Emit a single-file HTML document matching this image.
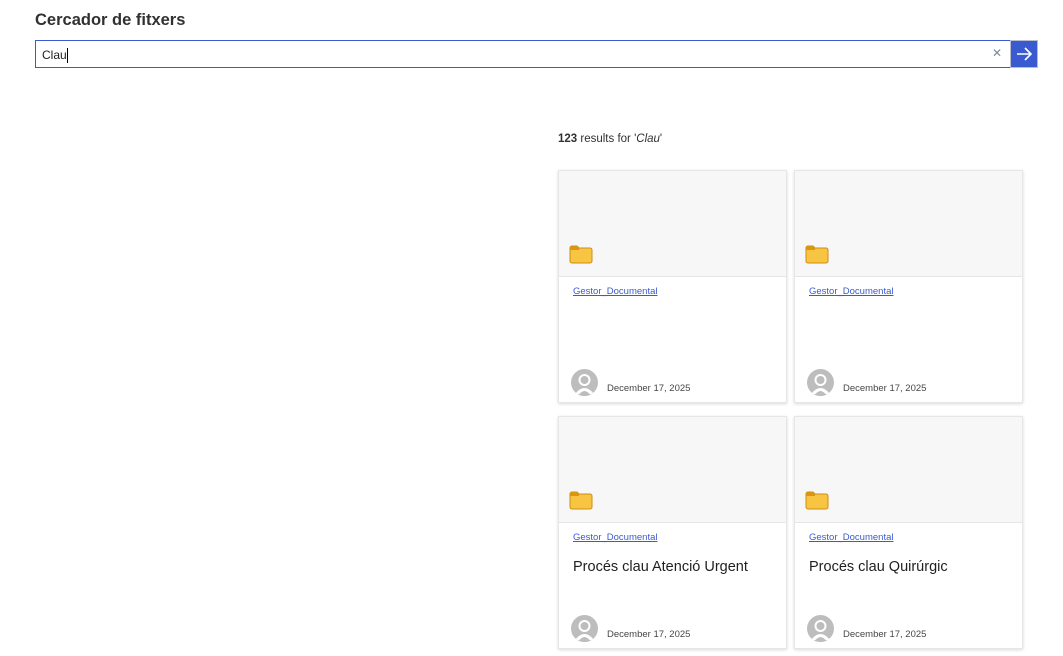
<!DOCTYPE html>
<html><head><meta charset="utf-8"><style>
*{box-sizing:border-box;margin:0;padding:0}
body{width:1063px;height:656px;overflow:hidden;background:#fff;font-family:"Liberation Sans","DejaVu Sans",sans-serif;color:#323130;position:relative}
.t{position:absolute;left:35px;top:11px;font-size:16.5px;font-weight:bold;color:#323130}
.sb{position:absolute;left:35px;top:40px;width:976px;height:28px;border:1px solid #3a5bd0;background:#fff}
.sb span{position:absolute;left:6px;top:7px;font-size:12px;color:#201f1e;border-right:1px solid #000;padding-right:0;line-height:15px}
.x{position:absolute;left:992px;top:46px;font-size:12px;color:#7a8aa0}
.go{position:absolute;left:1010px;top:40px;width:28px;height:28px;background:#3a5bd0;border:1px solid #b8bcd0}
.r{position:absolute;left:558px;top:133px;font-size:11.5px;color:#323130}
.card{position:absolute;width:229px;height:233px;background:#fff;border:1px solid #e6e6e6;box-shadow:0 1px 3px rgba(0,0,0,.15)}
.top{height:106px;background:#f7f7f7;border-bottom:1px solid #e6e6e6;position:relative}
.fold{position:absolute;left:10px;top:74px}
.lk{position:absolute;left:14px;top:115px;font-size:9.5px;color:#3a5bd0;text-decoration:underline}
.ti{position:absolute;left:14px;top:142px;font-size:14.5px;color:#201f1e}
.av{position:absolute;left:12px;top:198px;width:27px;height:27px;border-radius:50%;background:#bdbdbd;overflow:hidden}
.d{position:absolute;left:48px;top:212px;font-size:9.5px;color:#484644}
</style></head><body>
<div class="t">Cercador de fitxers</div>
<div class="sb"><span>Clau</span></div>
<div class="x">✕</div>
<div class="go"><svg width="26" height="26" viewBox="0 0 26 26"><path d="M6 13h14M14 7l6 6-6 6" stroke="#fff" stroke-width="1.6" fill="none"/></svg></div>
<div class="r"><b>123</b> results for '<i>Clau</i>'</div>

<div class="card" style="left:558px;top:170px"><div class="top"><svg class="fold" width="24" height="20" viewBox="0 0 24 20"><path d="M1 3a2 2 0 0 1 2-2h5l2 2h11a2 2 0 0 1 2 2v11a2 2 0 0 1-2 2H3a2 2 0 0 1-2-2z" fill="#f8c543" stroke="#d08d12" stroke-width="1"/><path d="M1 3a2 2 0 0 1 2-2h5l2 2v2H1z" fill="#d9960f"/></svg></div><div class="lk">Gestor_Documental</div><div class="av"><svg width="27" height="27"><circle cx="13.5" cy="11" r="6" fill="#fff"/><circle cx="13.5" cy="11" r="4" fill="#bdbdbd"/><path d="M4 25q9.5-12 19 0" fill="#fff"/><path d="M7 27q6.5-10 13 0" fill="#bdbdbd"/></svg></div><div class="d">December 17, 2025</div></div>
<div class="card" style="left:794px;top:170px"><div class="top"><svg class="fold" width="24" height="20" viewBox="0 0 24 20"><path d="M1 3a2 2 0 0 1 2-2h5l2 2h11a2 2 0 0 1 2 2v11a2 2 0 0 1-2 2H3a2 2 0 0 1-2-2z" fill="#f8c543" stroke="#d08d12" stroke-width="1"/><path d="M1 3a2 2 0 0 1 2-2h5l2 2v2H1z" fill="#d9960f"/></svg></div><div class="lk">Gestor_Documental</div><div class="av"><svg width="27" height="27"><circle cx="13.5" cy="11" r="6" fill="#fff"/><circle cx="13.5" cy="11" r="4" fill="#bdbdbd"/><path d="M4 25q9.5-12 19 0" fill="#fff"/><path d="M7 27q6.5-10 13 0" fill="#bdbdbd"/></svg></div><div class="d">December 17, 2025</div></div>
<div class="card" style="left:558px;top:416px"><div class="top"><svg class="fold" width="24" height="20" viewBox="0 0 24 20"><path d="M1 3a2 2 0 0 1 2-2h5l2 2h11a2 2 0 0 1 2 2v11a2 2 0 0 1-2 2H3a2 2 0 0 1-2-2z" fill="#f8c543" stroke="#d08d12" stroke-width="1"/><path d="M1 3a2 2 0 0 1 2-2h5l2 2v2H1z" fill="#d9960f"/></svg></div><div class="lk">Gestor_Documental</div><div class="ti">Procés clau Atenció Urgent</div><div class="av"><svg width="27" height="27"><circle cx="13.5" cy="11" r="6" fill="#fff"/><circle cx="13.5" cy="11" r="4" fill="#bdbdbd"/><path d="M4 25q9.5-12 19 0" fill="#fff"/><path d="M7 27q6.5-10 13 0" fill="#bdbdbd"/></svg></div><div class="d">December 17, 2025</div></div>
<div class="card" style="left:794px;top:416px"><div class="top"><svg class="fold" width="24" height="20" viewBox="0 0 24 20"><path d="M1 3a2 2 0 0 1 2-2h5l2 2h11a2 2 0 0 1 2 2v11a2 2 0 0 1-2 2H3a2 2 0 0 1-2-2z" fill="#f8c543" stroke="#d08d12" stroke-width="1"/><path d="M1 3a2 2 0 0 1 2-2h5l2 2v2H1z" fill="#d9960f"/></svg></div><div class="lk">Gestor_Documental</div><div class="ti">Procés clau Quirúrgic</div><div class="av"><svg width="27" height="27"><circle cx="13.5" cy="11" r="6" fill="#fff"/><circle cx="13.5" cy="11" r="4" fill="#bdbdbd"/><path d="M4 25q9.5-12 19 0" fill="#fff"/><path d="M7 27q6.5-10 13 0" fill="#bdbdbd"/></svg></div><div class="d">December 17, 2025</div></div>
</body></html>
